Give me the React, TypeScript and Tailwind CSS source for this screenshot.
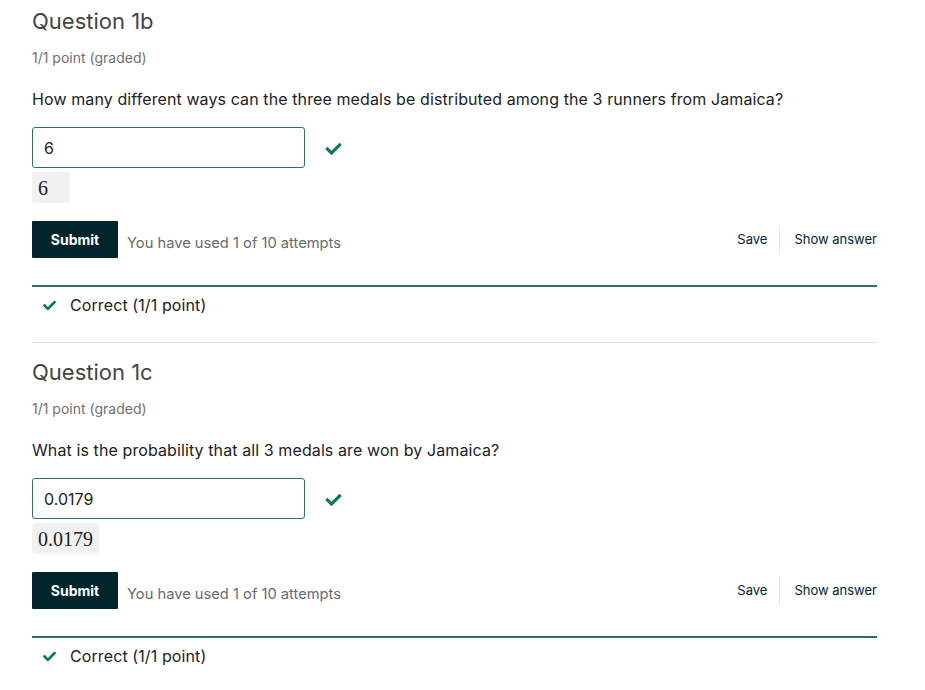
import React from 'react';

const Check: React.FC<{ className?: string }> = ({ className }) => (
  <svg viewBox="0 0 512 512" className={className} fill="currentColor">
    <path d="M173.898 439.404l-166.4-166.4c-9.997-9.997-9.997-26.206 0-36.204l36.203-36.204c9.997-9.998 26.207-9.998 36.204 0L192 312.69 432.095 72.596c9.997-9.997 26.207-9.997 36.204 0l36.203 36.204c9.997 9.997 9.997 26.206 0 36.204l-294.4 294.401c-9.998 9.997-26.207 9.997-36.204-.001z" />
  </svg>
);

type Q = { title: string; text: string; answer: string };

const questions: Q[] = [
  {
    title: 'Question 1b',
    text: 'How many different ways can the three medals be distributed among the 3 runners from Jamaica?',
    answer: '6',
  },
  {
    title: 'Question 1c',
    text: 'What is the probability that all 3 medals are won by Jamaica?',
    answer: '0.0179',
  },
];

const Problem: React.FC<{ q: Q; first?: boolean; last?: boolean }> = ({ q, first, last }) => (
  <div className={`${first ? '' : 'pt-[8px]'} ${last ? '' : 'border-b border-[#e1e1e1] pb-[25px]'}`}>
    <h2 className="pt-[7px] text-[22px] leading-[28px] font-normal text-[#454545]">{q.title}</h2>
    <div className="mt-[13px] text-[14px] leading-[20px] text-[#707070]">1/1 point (graded)</div>
    <p className="mt-[19px] text-[16px] leading-[24px] tracking-[0.1px] text-[#222]">{q.text}</p>

    {/* answer input */}
    <div className="mt-[16px] flex items-center">
      <div className="flex h-[41px] w-[273px] items-center rounded-[3px] border border-[#2d7553] px-[11px] text-[16px] text-[#222]">
        {q.answer}
      </div>
      <Check className="ml-[20px] mt-[3px] h-[16px] w-[17px] text-[#0f7a4d]" />
    </div>
    <div className="mt-[4px] flex">
      <div
        className="flex h-[31px] min-w-[38px] items-center rounded-[3px] bg-[#f1f1f1] px-[6px] text-[20px] text-[#222]"
        style={{ fontFamily: '"Liberation Serif", "DejaVu Serif", serif' }}
      >
        {q.answer}
      </div>
    </div>

    {/* actions */}
    <div className="mt-[18px] flex items-center">
      <button className="h-[37px] w-[86px] rounded-[1px] bg-[#00262b] text-[14px] font-bold text-white">Submit</button>
      <span className="ml-[9px] mt-[8px] text-[14.7px] text-[#6a6a6a]">You have used 1 of 10 attempts</span>
      <div className="ml-auto flex items-center text-[13px] text-[#00262b]">
        <span className="pr-[12px]">Save</span>
        <span className="h-[28px] w-px bg-[#e4e4e4]" />
        <span className="pl-[14px]">Show answer</span>
      </div>
    </div>

    {/* notification */}
    <div className="mt-[27px] border-t-2 border-[#2a7553] pt-[6px]">
      <div className="flex items-center">
        <Check className="ml-[10px] h-[13px] w-[15px] text-[#0f7a4d]" />
        <span className="ml-[13px] text-[16px] leading-[24px] tracking-[0.1px] text-[#222]">Correct (1/1 point)</span>
      </div>
    </div>
  </div>
);

const App: React.FC = () => (
  <div className="min-h-screen bg-white" style={{ fontFamily: 'Inter, "Liberation Sans", sans-serif' }}>
    <div className="ml-[32px] w-[845px]">
      {questions.map((q, i) => (
        <Problem key={q.title} q={q} first={i === 0} last={i === questions.length - 1} />
      ))}
    </div>
  </div>
);

export default App;
